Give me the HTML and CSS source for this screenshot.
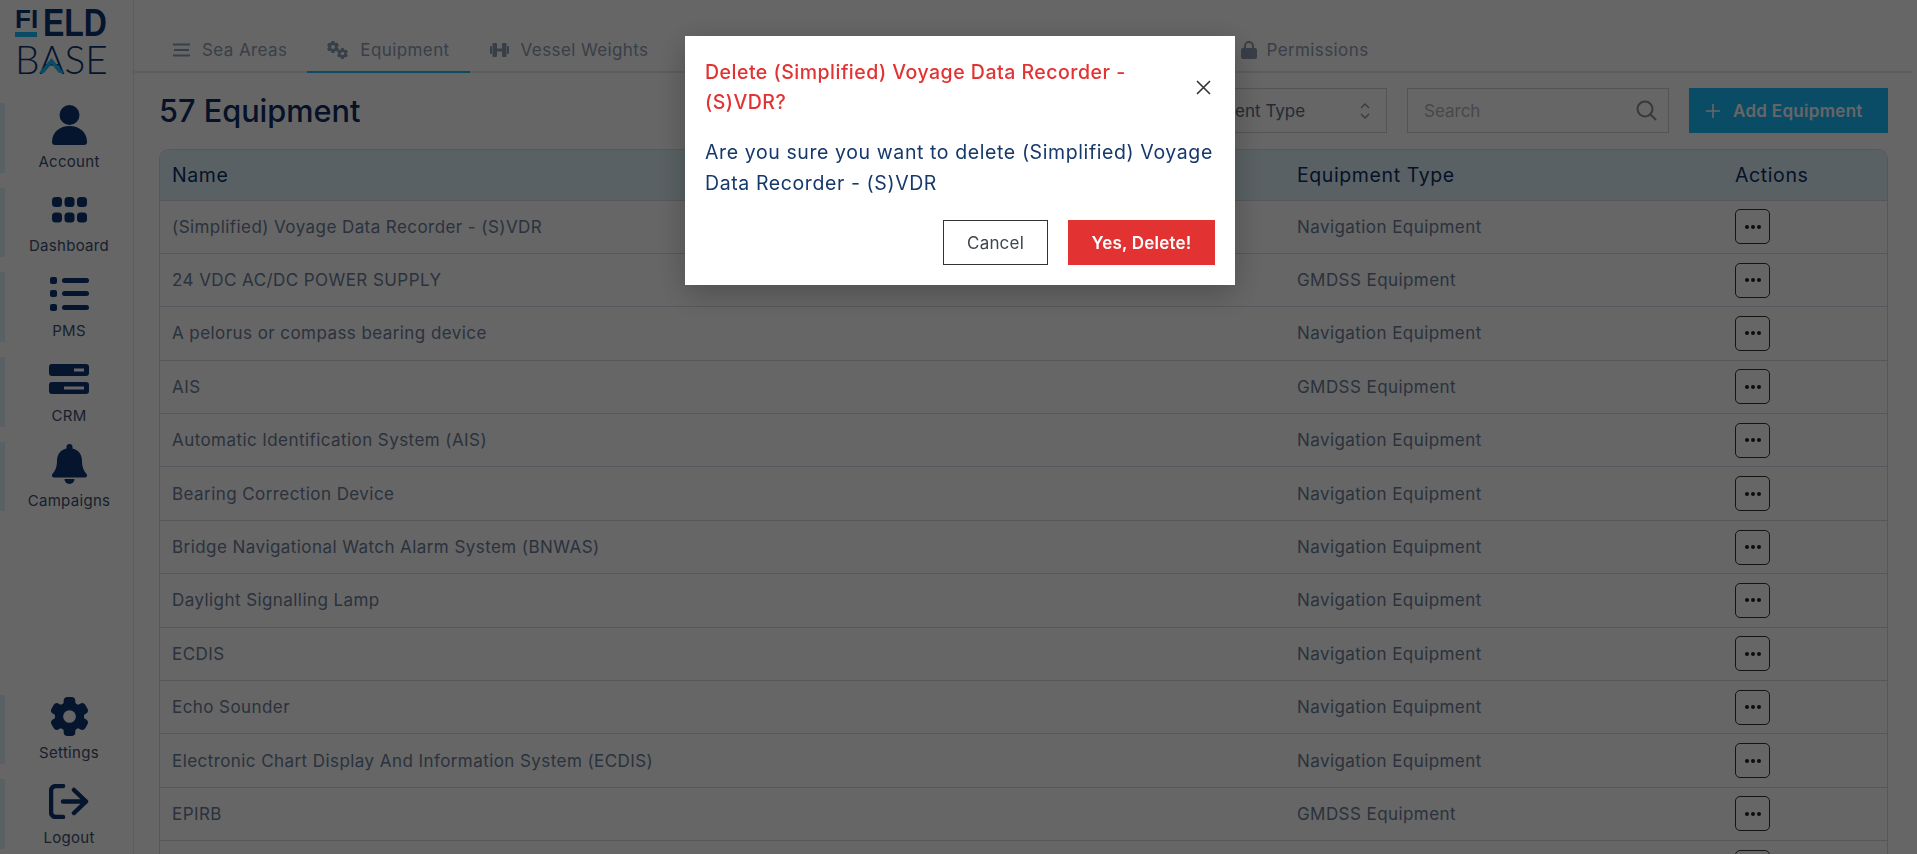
FILE: index.html
```html
<!DOCTYPE html>
<html>
<head>
    <title>Equipment</title>
    <link rel="stylesheet" href="styles.css">
</head>
<body>
    <!-- shared gear shape -->
    <svg class="defs" width="0" height="0">
        <symbol id="gear" viewBox="0 0 40 40">
            <g>
                <rect x="14" y="0" width="12" height="40" rx="4"/>
                <rect x="14" y="0" width="12" height="40" rx="4" transform="rotate(60 20 20)"/>
                <rect x="14" y="0" width="12" height="40" rx="4" transform="rotate(120 20 20)"/>
                <circle cx="20" cy="20" r="15"/>
            </g>
            <circle cx="20" cy="20" r="6.5" fill="#fff"/>
        </symbol>
    </svg>

    <div id="app">
        <aside class="sidebar">
            <div class="logo">
                <div class="logo-top">
                    <div class="logo-fi"><span>FI</span><i></i></div>
                    <span class="logo-eld">ELD</span>
                </div>
                <div class="logo-base">
                    <span>BASE</span>
                    <svg class="logo-mark" viewBox="0 0 25 15" preserveAspectRatio="none"><path d="M0 15 12.500 0 25 15h-5L12.500 6 5 15z"/></svg>
                </div>
            </div>

            <nav class="nav">
                <a class="nav-item">
                    <span class="nav-icon">
                        <svg width="35" height="40" viewBox="0 0 35 40"><circle cx="17.5" cy="10" r="10"/><path d="M0 37c0-10 8-16 17.5-16S35 27 35 37a3 3 0 0 1-3 3H3a3 3 0 0 1-3-3z"/></svg>
                    </span>
                    <span>Account</span>
                </a>
                <a class="nav-item">
                    <span class="nav-icon">
                        <svg width="35" height="26" viewBox="0 0 35 26"><rect width="10" height="10" rx="3.5"/><rect x="12.5" width="10" height="10" rx="3.5"/><rect x="25" width="10" height="10" rx="3.5"/><rect y="15.500" width="10" height="10" rx="3.5"/><rect x="12.500" y="15.500" width="10" height="10" rx="3.5"/><rect x="25" y="15.500" width="10" height="10" rx="3.5"/></svg>
                    </span>
                    <span>Dashboard</span>
                </a>
                <a class="nav-item">
                    <span class="nav-icon">
                        <svg width="39" height="34" viewBox="0 0 39 34"><rect width="7" height="7" rx="2"/><rect x="12" y="1" width="27" height="5" rx="2.5"/><rect y="13" width="7" height="7" rx="2"/><rect x="12" y="14" width="27" height="5" rx="2.5"/><rect y="27" width="7" height="7" rx="2"/><rect x="12" y="28" width="27" height="5" rx="2.5"/></svg>
                    </span>
                    <span>PMS</span>
                </a>
                <a class="nav-item">
                    <span class="nav-icon">
                        <svg width="40" height="30" viewBox="0 0 40 30"><rect width="40" height="12" rx="3"/><rect y="18" width="40" height="12" rx="3"/><rect class="cut" x="25" y="4.500" width="10" height="3"/><rect class="cut" x="15" y="22.500" width="20" height="3"/></svg>
                    </span>
                    <span>CRM</span>
                </a>
                <a class="nav-item">
                    <span class="nav-icon">
                        <svg width="35" height="40" viewBox="0 0 35 40"><path d="M17.500 0a3 3 0 0 1 3 3v1.500c6.500 1.500 9.500 6.500 9.500 12.500 0 6 2 10 4.500 13a2 2 0 0 1-1.500 3.500H2A2 2 0 0 1 .5 30C3 27 5 23 5 17 5 11 8 6 14.500 4.500V3a3 3 0 0 1 3-3z"/><path d="M12.500 35h10a5 5 0 0 1-10 0z"/></svg>
                    </span>
                    <span>Campaigns</span>
                </a>
            </nav>

            <nav class="nav nav-bottom">
                <a class="nav-item">
                    <span class="nav-icon">
                        <svg width="39" height="39"><use href="#gear"/></svg>
                    </span>
                    <span>Settings</span>
                </a>
                <a class="nav-item">
                    <span class="nav-icon">
                        <svg class="line-icon" width="40" height="35" viewBox="0 0 40 35"><path d="M14 2H7a5 5 0 0 0-5 5v21a5 5 0 0 0 5 5h7"/><path d="M14 17.500h23M25 6l12 11.500L25 29"/></svg>
                    </span>
                    <span>Logout</span>
                </a>
            </nav>
        </aside>

        <main class="main">
            <div class="tabs">
                <a class="tab">
                    <svg class="tab-line" width="17" height="14" viewBox="0 0 17 14"><path d="M0 1.500h17M1 7h15M0 12.500h17"/></svg>
                    Sea Areas
                </a>
                <a class="tab active">
                    <svg width="21" height="18" viewBox="0 0 21 18"><use href="#gear" width="12" height="12"/><use href="#gear" x="10" y="7" width="11" height="11"/></svg>
                    Equipment
                </a>
                <a class="tab">
                    <svg width="19" height="16" viewBox="0 0 19 16"><rect y="4" width="2" height="8" rx="1"/><rect x="2.500" y="1" width="4.500" height="14" rx="1"/><rect x="7" y="6.500" width="5" height="3"/><rect x="12" y="1" width="4.500" height="14" rx="1"/><rect x="17" y="4" width="2" height="8" rx="1"/></svg>
                    Vessel Weights
                </a>
                <div class="tabs-hidden"></div>
                <a class="tab tab-tight">
                    <svg width="16" height="18" viewBox="0 0 16 18"><path d="M3 8V5a5 5 0 0 1 10 0v3h-2V5a3 3 0 0 0-6 0v3z"/><rect y="7" width="16" height="11" rx="2"/></svg>
                    Permissions
                </a>
            </div>

            <div class="toolbar">
                <h1>57 Equipment</h1>
                <div class="filters">
                    <div class="select">
                        <span>Equipment Type</span>
                        <svg class="tool-line" width="10" height="18" viewBox="0 0 10 18"><path d="M1 6l4-4 4 4M1 12l4 4 4-4"/></svg>
                    </div>
                    <div class="search">
                        <span>Search</span>
                        <svg class="tool-line" width="21" height="21" viewBox="0 0 21 21"><circle cx="9" cy="9" r="7.500"/><path d="M14.500 14.500 20 20"/></svg>
                    </div>
                    <a class="btn-add">
                        <svg width="16" height="16" viewBox="0 0 16 16"><path d="M8 1v14M1 8h14"/></svg>
                        Add Equipment
                    </a>
                </div>
            </div>

            <div class="table-wrap">
                <table>
                    <colgroup>
                        <col class="col-name">
                        <col class="col-type">
                        <col>
                    </colgroup>
                    <thead>
                        <tr><th>Name</th><th>Equipment Type</th><th>Actions</th></tr>
                    </thead>
                    <tbody>
                        <tr><td>(Simplified) Voyage Data Recorder - (S)VDR</td><td>Navigation Equipment</td><td><button class="dots"><i></i><i></i><i></i></button></td></tr>
                        <tr><td>24 VDC AC/DC POWER SUPPLY</td><td>GMDSS Equipment</td><td><button class="dots"><i></i><i></i><i></i></button></td></tr>
                        <tr><td>A pelorus or compass bearing device</td><td>Navigation Equipment</td><td><button class="dots"><i></i><i></i><i></i></button></td></tr>
                        <tr><td>AIS</td><td>GMDSS Equipment</td><td><button class="dots"><i></i><i></i><i></i></button></td></tr>
                        <tr><td>Automatic Identification System (AIS)</td><td>Navigation Equipment</td><td><button class="dots"><i></i><i></i><i></i></button></td></tr>
                        <tr><td>Bearing Correction Device</td><td>Navigation Equipment</td><td><button class="dots"><i></i><i></i><i></i></button></td></tr>
                        <tr><td>Bridge Navigational Watch Alarm System (BNWAS)</td><td>Navigation Equipment</td><td><button class="dots"><i></i><i></i><i></i></button></td></tr>
                        <tr><td>Daylight Signalling Lamp</td><td>Navigation Equipment</td><td><button class="dots"><i></i><i></i><i></i></button></td></tr>
                        <tr><td>ECDIS</td><td>Navigation Equipment</td><td><button class="dots"><i></i><i></i><i></i></button></td></tr>
                        <tr><td>Echo Sounder</td><td>Navigation Equipment</td><td><button class="dots"><i></i><i></i><i></i></button></td></tr>
                        <tr><td>Electronic Chart Display And Information System (ECDIS)</td><td>Navigation Equipment</td><td><button class="dots"><i></i><i></i><i></i></button></td></tr>
                        <tr><td>EPIRB</td><td>GMDSS Equipment</td><td><button class="dots"><i></i><i></i><i></i></button></td></tr>
                        <tr><td></td><td></td><td><button class="dots"><i></i><i></i><i></i></button></td></tr>
                    </tbody>
                </table>
            </div>
        </main>
    </div>

    <div class="overlay">
        <div class="modal">
            <div class="modal-head">
                <h2>Delete (Simplified) Voyage Data Recorder - (S)VDR?</h2>
                <svg class="modal-close" width="15" height="15" viewBox="0 0 15 15"><path d="M1 1l13 13M14 1 1 14"/></svg>
            </div>
            <p>Are you sure you want to delete (Simplified) Voyage Data Recorder - (S)VDR</p>
            <div class="modal-actions">
                <button class="btn-cancel">Cancel</button>
                <button class="btn-delete">Yes, Delete!</button>
            </div>
        </div>
    </div>
</body>
</html>
```

FILE: styles.css
```css
:root {
    --navy: #0d3570;
    --blue: #1abcff;
    --tint: #e1f3fa;
    --line: #d8d8e6;
    --red: #e33232;
}

* {
    box-sizing: border-box;
}

html, body {
    margin: 0;
    height: 854px;
    overflow: hidden;
    background: #fff;
    font-family: Inter, 'Noto Sans', sans-serif;
}

.defs {
    position: absolute;
}

#app {
    display: flex;
    height: 854px;
    overflow: hidden;
}

/* sidebar */
.sidebar {
    width: 134px;
    flex: none;
    display: flex;
    flex-direction: column;
    border-right: 1px solid #e6e6e6;
    padding: 9px 0 5px;
}

.logo {
    margin-left: 15px;
    width: 92px;
    height: 94px;
    color: var(--navy);
    line-height: 1;
}

.logo-top {
    display: flex;
    height: 35px;
    font-family: 'Liberation Sans', sans-serif;
    font-weight: bold;
}

.logo-fi {
    width: 22px;
    font-size: 26px;
    line-height: 20px;
}

.logo-fi i {
    display: block;
    height: 5px;
    margin-top: 3px;
    background: var(--blue);
}

.logo-eld {
    font-size: 39px;
    line-height: 28px;
    margin-left: 6px;
    transform: scaleX(0.82);
    transform-origin: left top;
}

.logo-base {
    position: relative;
    font-family: Lato, sans-serif;
    font-weight: 300;
    font-size: 40px;
    line-height: 30px;
}

.logo-base span {
    display: inline-block;
    transform: scaleX(0.97);
    transform-origin: left top;
}

.logo-mark {
    position: absolute;
    left: 24px;
    top: 14px;
    width: 25px;
    height: 15px;
    fill: var(--blue);
}

.nav {
    display: flex;
    flex-direction: column;
    gap: 15px;
}

.nav-bottom {
    margin-top: auto;
}

.nav-item {
    height: 69.7px;
    display: flex;
    flex-direction: column;
    align-items: center;
    border-left: 5px solid var(--tint);
    padding-top: 2px;
    font-size: 15px;
    letter-spacing: 0.3px;
    line-height: 22px;
    color: #3c506f;
}

.nav-icon {
    height: 40px;
    margin-bottom: 6px;
    display: flex;
    align-items: center;
}

.nav-icon svg {
    fill: var(--navy);
    display: block;
}

.nav-icon .cut {
    fill: #fff;
}

.nav-icon .line-icon {
    fill: none;
    stroke: var(--navy);
    stroke-width: 4.500;
    stroke-linecap: round;
    stroke-linejoin: round;
}

/* main */
.main {
    flex: 1;
    min-width: 0;
    padding-right: 5px;
}

.tabs {
    display: flex;
    height: 73px;
    padding: 36px 0 0 19px;
    border-bottom: 2px solid #e8e8e8;
}

.tab {
    height: 37px;
    padding: 0 20px 7px;
    display: flex;
    align-items: center;
    gap: 12px;
    font-size: 17px;
    letter-spacing: 0.4px;
    color: #8e9db3;
    border-bottom: 2px solid transparent;
}

.tab svg {
    fill: #8e9db3;
    flex: none;
}

.tab .tab-line {
    fill: none;
    stroke: #8e9db3;
    stroke-width: 2;
}

.tab.active {
    border-bottom-color: var(--blue);
}

.tab-tight {
    gap: 9px;
}

.tabs-hidden {
    width: 553px;
}

.toolbar {
    display: flex;
    justify-content: space-between;
    align-items: center;
    height: 45px;
    margin: 15px 24px 16px 25px;
}

h1 {
    margin: 0;
    font-size: 30.7px;
    font-weight: 500;
    color: #0d2f63;
}

.filters {
    display: flex;
    gap: 20px;
}

.select, .search {
    height: 45px;
    border: 1px solid #d3d3d8;
    display: flex;
    align-items: center;
    justify-content: space-between;
    font-size: 17px;
}

.select {
    width: 250px;
    padding: 0 16px 0 37px;
    color: #5a6a85;
}

.search {
    width: 262px;
    padding: 0 11px 0 16px;
    color: #b0b5bd;
}

.tool-line {
    fill: none;
    stroke: #8a8f98;
    stroke-width: 2;
}

.select .tool-line {
    stroke-width: 1.3;
}

.btn-add {
    width: 199px;
    height: 45px;
    background: var(--blue);
    display: flex;
    align-items: center;
    gap: 12px;
    padding-left: 16px;
    font-size: 17px;
    letter-spacing: 0.3px;
    font-weight: 600;
    color: #fff;
}

.btn-add svg {
    stroke: #fff;
    stroke-width: 1.6;
}

.table-wrap {
    margin-left: 25px;
    margin-right: 24px;
    border: 1px solid var(--line);
    border-bottom: 0;
    border-radius: 10px 10px 0 0;
    overflow: hidden;
}

table {
    width: 100%;
    table-layout: fixed;
    border-collapse: collapse;
}

.col-name {
    width: 1125px;
}

.col-type {
    width: 438px;
}

th {
    height: 50px;
    padding: 0 12px;
    background: var(--tint);
    text-align: left;
    font-size: 19.5px;
    letter-spacing: 0.6px;
    font-weight: 400;
    color: #0d2f63;
    border-bottom: 1px solid var(--line);
}

td {
    height: 53.4px;
    padding: 0 12px;
    font-size: 17px;
    letter-spacing: 0.43px;
    color: #6c7d99;
    border-bottom: 1px solid var(--line);
}

.dots {
    width: 35px;
    height: 35px;
    padding: 0;
    background: transparent;
    border: 1px solid #333;
    border-radius: 5px;
    display: flex;
    align-items: center;
    justify-content: center;
    gap: 2px;
}

.dots i {
    width: 4px;
    height: 4px;
    border-radius: 50%;
    background: #222;
}

/* modal */
.overlay {
    position: fixed;
    inset: 0;
    background: rgba(0, 0, 0, 0.6);
    display: flex;
    justify-content: center;
    align-items: flex-start;
    padding: 36px 0 0 3px;
}

.modal {
    width: 550px;
    height: 249px;
    background: #fff;
    padding: 21px 20px 20px;
    box-shadow: 0 8px 30px rgba(0, 0, 0, 0.25);
}

.modal-head {
    display: flex;
    align-items: center;
    justify-content: space-between;
}

h2 {
    margin: 0;
    width: 450px;
    font-size: 19.5px;
    letter-spacing: 0.5px;
    line-height: 30px;
    font-weight: 500;
    color: var(--red);
}

.modal-close {
    margin-right: 4px;
    fill: none;
    stroke: #333;
    stroke-width: 1.6;
}

.modal p {
    margin: 20px 0 21px;
    font-size: 19.5px;
    letter-spacing: 0.6px;
    line-height: 31px;
    color: #16396b;
}

.modal-actions {
    display: flex;
    justify-content: flex-end;
    gap: 20px;
}

.modal-actions button {
    height: 45px;
    font-family: inherit;
    font-size: 17px;
    letter-spacing: 0.2px;
}

.btn-cancel {
    width: 105px;
    background: #fff;
    border: 1px solid #333;
    color: #3e4450;
    letter-spacing: 0.6px;
}

.btn-delete {
    width: 147px;
    background: var(--red);
    border: 0;
    color: #fff;
    font-weight: 600;
}
```
